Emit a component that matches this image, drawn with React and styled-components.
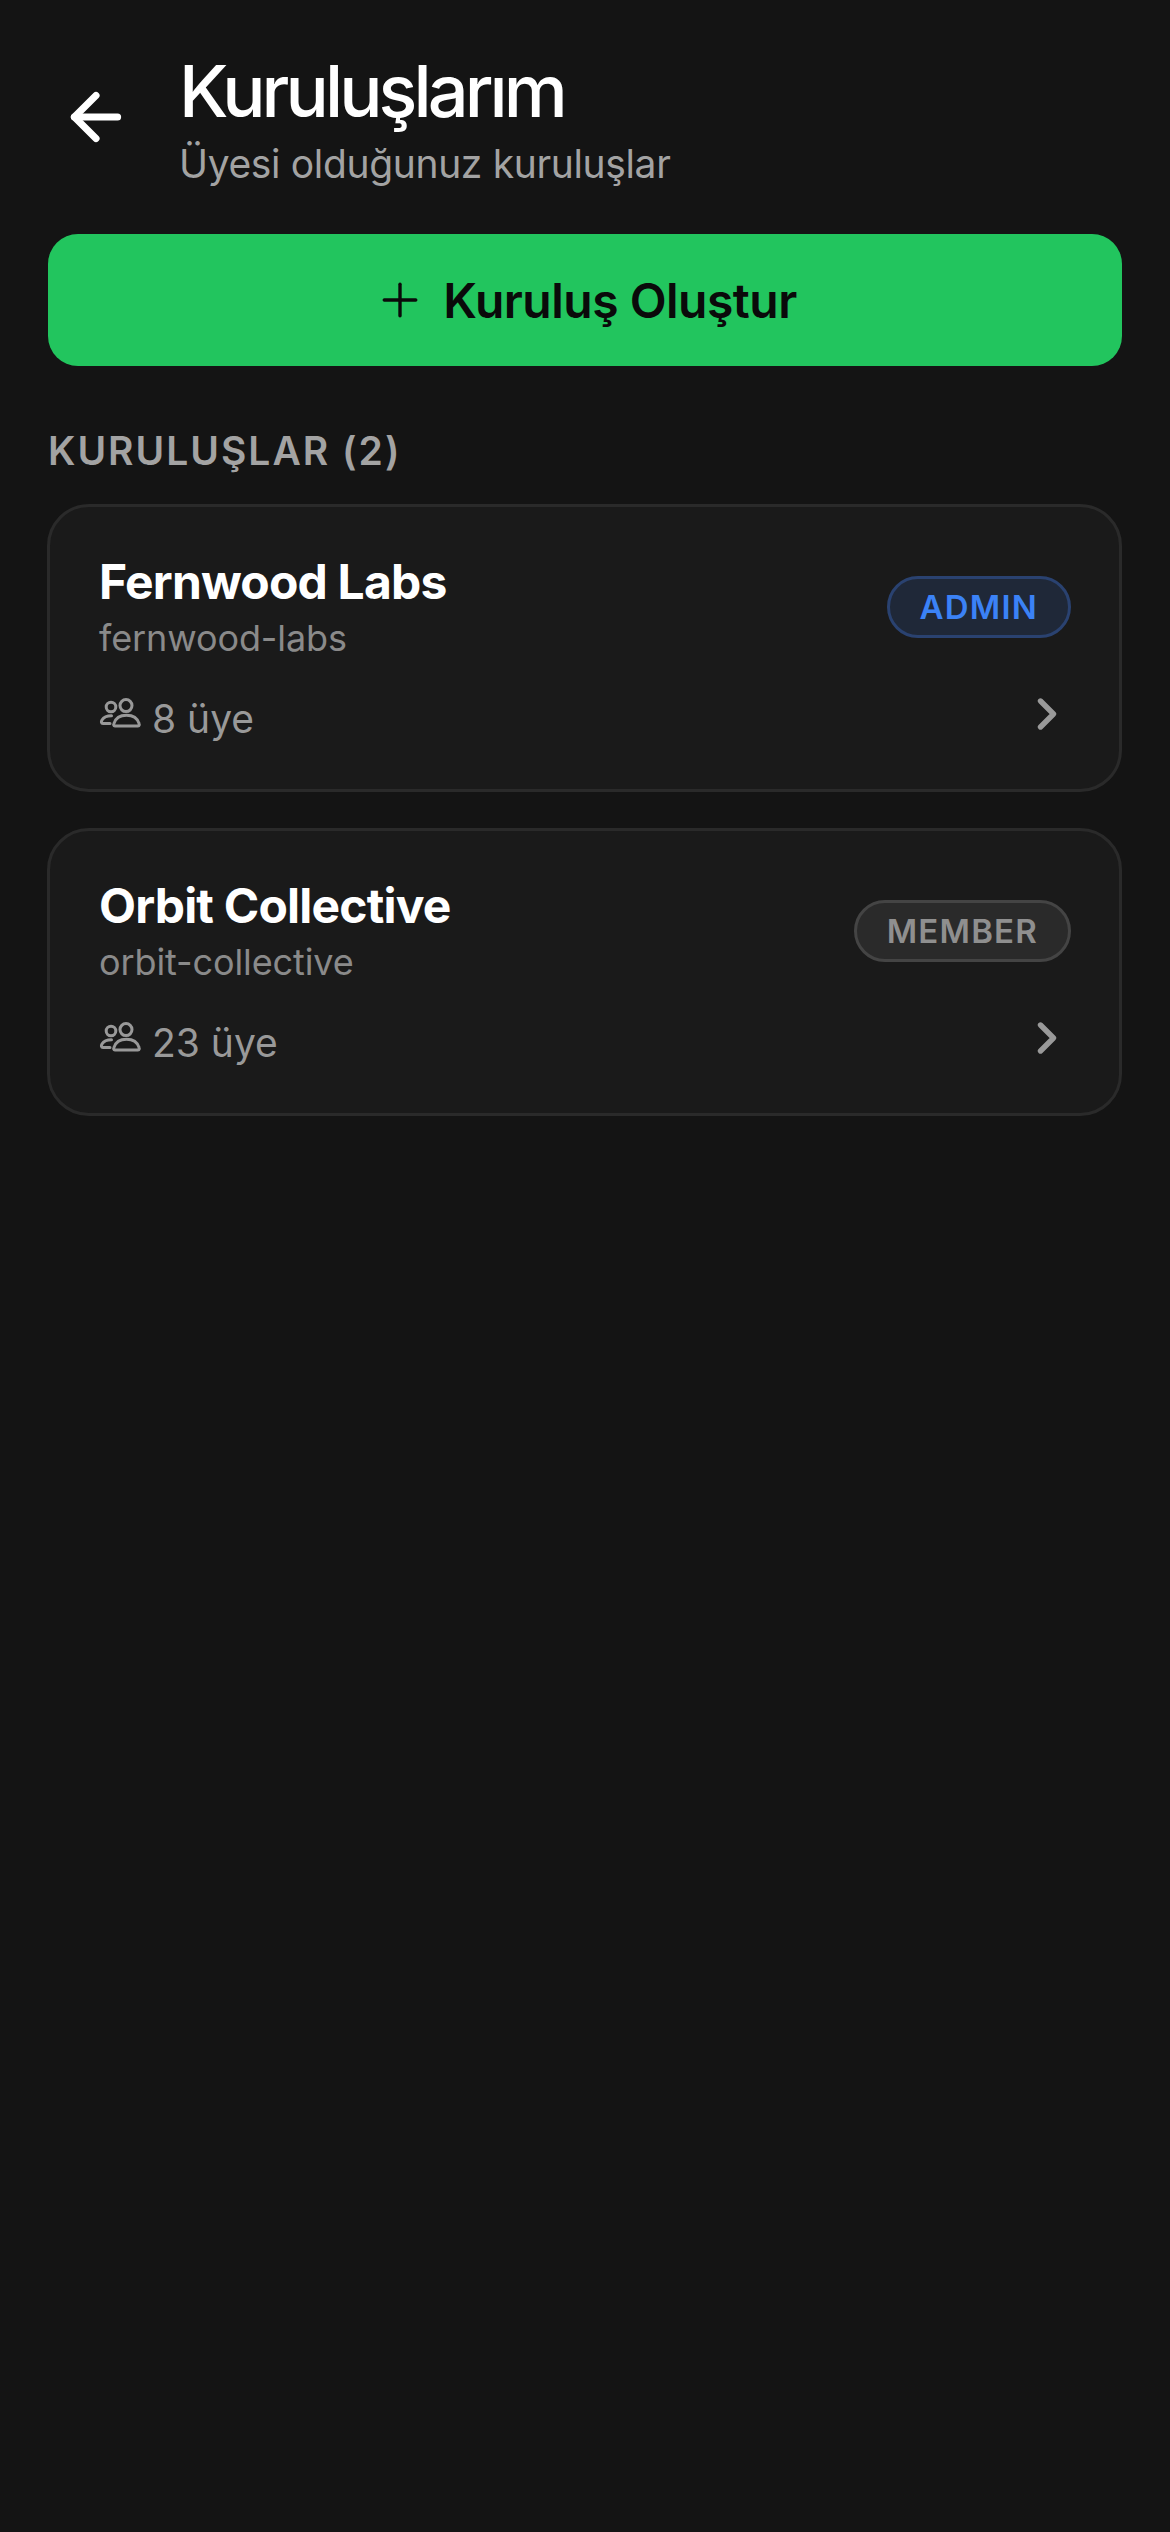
import React from 'react';
import styled, { createGlobalStyle } from 'styled-components';
import { ArrowLeft, Plus, ChevronRight } from 'lucide-react';

const Global = createGlobalStyle`
  html, body { margin: 0; padding: 0; background: #141414; }
  * { box-sizing: border-box; }
`;

const Page = styled.div`
  width: 1170px;
  height: 2532px;
  overflow: hidden;
  background: #141414;
  font-family: Inter, "Noto Sans", sans-serif;
  color: #fff;
  padding: 48px 48px 0 47px;
`;

const Header = styled.header`
  display: flex;
  align-items: center;
  gap: 45px;
  height: 138px;
  padding-left: 11px;
`;

const BackButton = styled.div`
  width: 76px;
  height: 76px;
  display: flex;
  align-items: center;
  justify-content: center;
  color: #fff;
`;

const Titles = styled.div`
  display: flex;
  flex-direction: column;
  margin-top: 3px;
`;

const Title = styled.h1`
  margin: 0;
  font-size: 72px;
  line-height: 84px;
  font-weight: 500;
  letter-spacing: -3.9px;
`;

const Subtitle = styled.div`
  font-size: 39px;
  line-height: 50px;
  letter-spacing: -0.35px;
  padding-top: 6px;
  color: #a3a3a3;
`;

const CreateButton = styled.div`
  margin-top: 48px;
  margin-left: 1px;
  height: 132px;
  border-radius: 30px;
  background: #22c55e;
  color: #0a0a0a;
  display: flex;
  align-items: center;
  justify-content: center;
  gap: 16px;
  font-size: 48px;
  font-weight: 600;
  letter-spacing: -0.5px;
`;

const SectionLabel = styled.div`
  margin-top: 61px;
  margin-left: 1px;
  font-size: 39px;
  line-height: 48px;
  font-weight: 600;
  letter-spacing: 2px;
  color: #a3a3a3;
`;

const Cards = styled.div`
  margin-top: 29px;
  display: flex;
  flex-direction: column;
  gap: 36px;
`;

const Card = styled.div`
  height: 288px;
  border: 3px solid #2a2a2a;
  border-radius: 42px;
  background: #1a1a1a;
  padding: 45px 48px 0 49px;
  display: flex;
  flex-direction: column;
  gap: 23px;
`;

const Row = styled.div`
  display: flex;
  align-items: center;
  justify-content: space-between;
`;

const Name = styled.div`
  font-size: 48px;
  line-height: 60px;
  font-weight: 700;
  letter-spacing: -0.8px;
`;

const Slug = styled.div`
  margin-top: 2px;
  font-size: 36px;
  line-height: 48px;
  letter-spacing: -0.1px;
  color: #8a8a8a;
`;

const Badge = styled.div`
  height: 62px;
  padding: 0 30px;
  border-radius: 31px;
  display: flex;
  align-items: center;
  font-size: 33px;
  font-weight: 600;
  letter-spacing: 1.2px;
  border: 3px solid ${p => (p.$admin ? '#2a4270' : '#444444')};
  background: ${p => (p.$admin ? '#1f2838' : '#2a2a2a')};
  color: ${p => (p.$admin ? '#3b82f6' : '#8f8f8f')};
`;

const Members = styled.div`
  display: flex;
  align-items: center;
  gap: 8px;
  font-size: 39px;
  color: #999999;
`;

const MemberCount = styled.span`
  padding-top: 10px;
`;

const ChevronWrap = styled.div`
  color: #999999;
  display: flex;
  margin-right: -2px;
`;

// two people, the front one overlapping the back one
const PeopleIcon = () => (
  <svg width="45" height="36" viewBox="0 0 45 36" fill="none" stroke="currentColor" strokeWidth="3" strokeLinejoin="round" strokeLinecap="round">
    <circle cx="12" cy="11" r="4.8" />
    <circle cx="27" cy="9.6" r="6" />
    <path d="M16 30 C14.5 30 14.4 28.5 15 27.4 C16.5 22.5 21 19.2 27.5 19.2 C34 19.2 38.5 22.5 40 27.4 C40.5 28.5 40.4 30 39 30 Z" />
    <path d="M11 27.4 H4 C2.2 27.4 2 25.8 3 24 C4.6 21.4 8 19.8 12.5 19.8" />
  </svg>
);

const orgs = [
  { name: 'Fernwood Labs', slug: 'fernwood-labs', role: 'ADMIN', members: 8 },
  { name: 'Orbit Collective', slug: 'orbit-collective', role: 'MEMBER', members: 23 },
];

export default function App() {
  return (
    <Page>
      <Global />
      <Header>
        <BackButton><ArrowLeft size={74} strokeWidth={2.3} /></BackButton>
        <Titles>
          <Title>Kuruluşlarım</Title>
          <Subtitle>Üyesi olduğunuz kuruluşlar</Subtitle>
        </Titles>
      </Header>
      <CreateButton><Plus size={54} strokeWidth={1.5} />Kuruluş Oluştur</CreateButton>
      <SectionLabel>KURULUŞLAR (2)</SectionLabel>
      <Cards>
        {orgs.map(org => (
          <Card key={org.slug}>
            <Row>
              <div>
                <Name>{org.name}</Name>
                <Slug>{org.slug}</Slug>
              </div>
              <Badge $admin={org.role === 'ADMIN'}>{org.role}</Badge>
            </Row>
            <Row>
              <Members><PeopleIcon /><MemberCount>{org.members} üye</MemberCount></Members>
              <ChevronWrap><ChevronRight size={52} strokeWidth={2.5} /></ChevronWrap>
            </Row>
          </Card>
        ))}
      </Cards>
    </Page>
  );
}
